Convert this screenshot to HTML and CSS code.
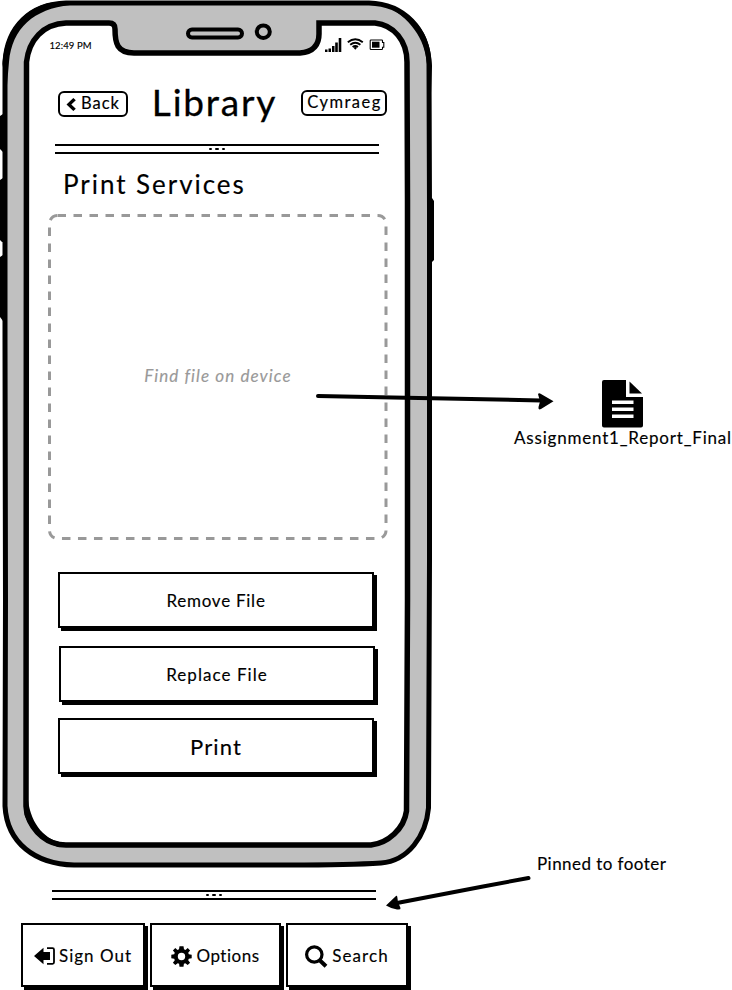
FILE: index.html
```html
<!DOCTYPE html>
<html lang="en">
<head>
<meta charset="utf-8">
<title>Library – Print Services</title>
<link rel="stylesheet" href="styles.css">
</head>
<body>
<main class="board">
  <section class="phone">
    <svg class="phone-frame" width="440" height="872" viewBox="0 0 440 872" aria-hidden="true">
      <path d="M0 116 3 114H7V152H3L0 149ZM0 180 3 178H7V242H2L0 240ZM0 257 3 255H7V321H3L0 317ZM428 198H432L434 201V260L432 262H428Z"/>
      <path class="shell" d="M5 62C7 27 30 4 66 3H369C404 4 428 29 429 64L429.500 210 429.500 560 428.500 808C426 836 408 861 381 863Q350 865 290 865H74C35 864 7 843 5 806L5.500 600 5 340Z"/>
      <path class="glass" d="M26.500 62C29 40 43 24 66 23H109Q115 23 115 29C115 43 117 53 134 53H300C314 52 319 44 319 34V23H375C394 25 407 41 407 62L407.500 200 407.500 600 406.500 811C404 829 388 843 371 845H66C48 845 33 833 27 814L26 806Z"/>
      <path d="M383 4C411 10 431 31 432 66L430 120 427 64C425 39 411 18 383 4ZM5 80 2.500 64C5 28 27 5 56 2L70 5C34 9 12 28 9 62L7 85ZM24 806 25 816C31 831 42 842 58 847L64 843C46 841 31 825 28 800Z"/>
      <rect class="slot" x="188" y="29.500" width="54" height="8" rx="4"/>
      <ellipse class="slot" cx="263.300" cy="31.700" rx="6.500" ry="6.300"/>
    </svg>
    <div class="screen">
      <div class="status">
        <span class="time">12:49 PM</span>
        <svg width="60" height="14" viewBox="0 0 60 14" aria-hidden="true">
          <path d="M0 11.500h2.500V14H0zM3.500 10.500H6V14H3.500zM7 8H9.500v6H7zM10.200 4.500h2.600V14h-2.600zM13.700 0h2.600v14h-2.600z"/>
          <path class="wave" d="M22.800 4.200Q30.300-1.700 37.800 4.200M25.200 6.700q5.100-4 10.200 0M27.600 9q2.700-2.100 5.400 0"/>
          <path d="m28.500 9.700 1.800-1 1.800 1-1.800 2z"/>
          <path class="cell" d="M46 2h10.700q.8 0 .8.800V4.500h1.300v4.700h-1.300v1.500q0 .8-.8.800H46q-.8 0-.8-.8V2.800q0-.8.800-.8z"/>
          <path d="M47 3.700h7.500v6H47z"/>
        </svg>
      </div>
      <header class="header">
        <button class="pill back">
          <svg width="10" height="13" viewBox="0 0 10 13" aria-hidden="true"><path d="M7.300 0 9.800 2.300 5.300 6.500 9.800 10.700 7.300 13 .5 6.500z"/></svg>
          <span>Back</span>
        </button>
        <h1>Library</h1>
        <button class="pill lang"><span>Cymraeg</span></button>
      </header>
      <div class="rule"><i></i><i></i><i></i></div>
      <h2>Print Services</h2>
      <div class="drop">
        <svg class="drop-edge" width="340" height="327" viewBox="0 0 340 327" aria-hidden="true"><rect x="1.500" y="2.500" width="336.500" height="323" rx="8"/></svg>
        <span class="hint">Find file on device</span>
      </div>
      <div class="actions">
        <button class="box remove"><span>Remove File</span></button>
        <button class="box replace"><span>Replace File</span></button>
        <button class="box print"><span>Print</span></button>
      </div>
    </div>
  </section>

  <footer class="footer">
    <div class="rule"><i></i><i></i><i></i></div>
    <nav class="tabs">
      <button class="box signout">
        <svg width="22" height="18" viewBox="0 0 22 18" aria-hidden="true"><path d="M0 9 9.500.8V5H16v8H9.500v4.200z"/><path class="door" d="M13 1.200h5.500q1.500 0 1.500 1.500v12.600q0 1.500-1.500 1.500H13"/></svg>
        <span>Sign Out</span>
      </button>
      <button class="box options">
        <svg width="21" height="21" viewBox="-10.500 -10.500 21 21" aria-hidden="true"><path fill-rule="evenodd" d="M-2-10.200H2L2.500-7.200 4-6.500 6.200-8.500 8.600-6 6.700-3.700 7.300-2.200 10.200-1.800V1.800L7.300 2.300 6.700 3.800 8.600 6.200 6.200 8.600 3.800 6.700 2.400 7.300 2 10.200H-2L-2.400 7.300-3.800 6.700-6.200 8.600-8.600 6.200-6.700 3.800-7.300 2.300-10.200 1.800V-1.800L-7.300-2.200-6.700-3.700-8.600-6-6.200-8.500-4-6.500-2.500-7.200ZM0-3.700A3.700 3.700 0 0 0 0 3.700 3.700 3.700 0 0 0 0-3.700Z"/></svg>
        <span>Options</span>
      </button>
      <button class="box search">
        <svg width="23" height="23" viewBox="0 0 23 23" aria-hidden="true"><circle class="lens" cx="9.300" cy="9.500" r="7.700"/><path class="grip" d="m14.700 15.200 6.300 6"/></svg>
        <span>Search</span>
      </button>
    </nav>
  </footer>

  <figure class="file">
    <svg width="42" height="48" viewBox="0 0 42 48" aria-hidden="true"><path fill-rule="evenodd" d="M2 0H24V17H41V45.500Q41 47.500 39 47.500H2Q0 47.500 0 45.500V2Q0 0 2 0ZM10 20.500V24H31.500V20.500ZM10 27.500V31H31.500V27.500ZM10 34.500V38H31.500V34.500Z"/><path d="M27.500 1.500V13.500H40z"/></svg>
    <figcaption>Assignment1_Report_Final</figcaption>
  </figure>
  <p class="note">Pinned to footer</p>
  <svg class="arrow to-file" width="240" height="24" viewBox="0 0 240 24" aria-hidden="true"><path class="shaft" d="m3 6 75 1.500 148 3"/><path d="M223 4Q224 2.500 226 4L238.500 11.300 226 19Q223 20.500 223.500 17L225 11.500Z"/></svg>
  <svg class="arrow to-footer" width="150" height="40" viewBox="0 0 150 40" aria-hidden="true"><path class="shaft" d="M143.500 8 98 16.500 12 33"/><path d="M1 35.500 11 26Q12 25 12.300 27L13 32 15.500 38Q16 40 12 39.500 7 39 1 35.500Z"/></svg>
</main>
</body>
</html>
```
FILE: styles.css
```css
* { box-sizing: border-box; }

body {
  margin: 0;
  background: #fff;
  color: #000;
  font-family: Lato, "Liberation Sans", sans-serif;
  font-variant-ligatures: none;
  -webkit-text-stroke: 0.15px currentColor;
}

h1, h2, p, figure { margin: 0; font-weight: 400; }
svg { display: block; flex: none; overflow: visible; }

button {
  font: inherit;
  color: inherit;
  background: #fff;
  padding: 0;
  display: flex;
  align-items: center;
  justify-content: center;
  white-space: nowrap;
}

.board {
  position: relative;
  width: 732px;
  height: 990px;
  overflow: hidden;
}

/* Phone */
.phone { position: relative; width: 440px; height: 872px; }
.phone-frame { position: absolute; inset: 0; }
.shell { fill: #c0c0c0; stroke: #000; stroke-width: 5; }
.glass { fill: #fff; stroke: #000; stroke-width: 5.5; stroke-linejoin: miter; }
.slot { fill: #c0c0c0; stroke: #000; stroke-width: 4; }

.screen {
  position: relative;
  width: 388px;
  padding: 37px 0 0 48px;
}

.status {
  display: flex;
  justify-content: space-between;
  align-items: center;
  height: 16px;
  padding-left: 1.5px;
  margin-right: 3px;
}
.time { font-size: 9.5px; letter-spacing: 0.1px; }
.wave { fill: none; stroke: #000; stroke-width: 1.9; }
.cell { fill: none; stroke: #000; stroke-width: 1.1; }

.header {
  display: grid;
  grid-template-columns: 70px 1fr 86px;
  align-items: center;
  height: 50px;
  margin: 26px 1px 0 10px;
}
h1 {
  margin: -2px 0 2px;
  font-size: 37px;
  line-height: 50px;
  text-align: center;
  letter-spacing: 1.8px;
  -webkit-text-stroke-width: 0.3px;
}
.pill {
  height: 26px;
  border: 2px solid #000;
  border-radius: 6px;
  font-size: 16.5px;
}
.pill span { margin-top: -2px; }
.back { gap: 5px; letter-spacing: 1px; }
.lang { margin-top: -2px; letter-spacing: 1.5px; padding-left: 1px; }

.rule {
  display: flex;
  justify-content: center;
  align-items: center;
  gap: 3px;
  width: 324px;
  height: 10px;
  border-top: 2px solid #000;
  border-bottom: 2px solid #000;
}
.rule i { width: 3.5px; height: 2.5px; border-radius: 1px; background: #000; }
.screen .rule { margin: 15px 0 0 7px; }

h2 {
  margin: 12px 0 0 15px;
  height: 36px;
  font-size: 26px;
  line-height: 36px;
  white-space: nowrap;
  letter-spacing: 1.95px;
}

.drop {
  position: relative;
  display: flex;
  justify-content: center;
  align-items: center;
  width: 340px;
  height: 327px;
  margin-top: 11px;
}
.drop-edge { position: absolute; inset: 0; }
.drop-edge rect { fill: none; stroke: #999; stroke-width: 3; stroke-dasharray: 8.5 7.5; }
.hint { margin-top: -2px; color: #999; font-size: 17px; font-style: italic; letter-spacing: 1.1px; }

.box {
  border: 2px solid #000;
  box-shadow: 3px 3px 0 #000;
  font-size: 17px;
}
.actions { padding-top: 32px; width: 330px; }
.actions .box { width: 316px; height: 56px; margin-left: 10px; }
.actions .remove { letter-spacing: 0.75px; }
.actions .replace { margin: 18px 0 16px 11px; letter-spacing: 1.05px; }
.actions .print { font-size: 22px; letter-spacing: 1.1px; }

/* Footer */
.footer { padding-top: 18px; }
.footer .rule { margin-left: 52px; }
.tabs { display: flex; gap: 5px; padding: 23px 0 0 21px; }
.tabs .box { height: 64px; }
.tabs svg { margin-top: 2px; }
.signout { width: 124px; gap: 3px; letter-spacing: 1px; }
.options { width: 131px; gap: 4px; letter-spacing: 0.5px; }
.search { width: 122px; gap: 4px; letter-spacing: 1.1px; }
.door { fill: none; stroke: #000; stroke-width: 1.8; }
.lens { fill: none; stroke: #000; stroke-width: 3.2; }
.grip { fill: none; stroke: #000; stroke-width: 4; }

/* Annotations pinned on the canvas */
.file { position: absolute; left: 514px; top: 380px; width: 218px; }
.file svg { margin-left: 88px; }
figcaption { font-size: 17px; line-height: 20px; white-space: nowrap; letter-spacing: 0.8px; }
.note { position: absolute; left: 537px; top: 853px; font-size: 17px; line-height: 22px; white-space: nowrap; letter-spacing: 0.45px; }
.arrow { position: absolute; }
.to-file { left: 315px; top: 390px; }
.to-footer { left: 385px; top: 870px; }
.shaft { fill: none; stroke: #000; stroke-width: 4; stroke-linecap: round; }
```
